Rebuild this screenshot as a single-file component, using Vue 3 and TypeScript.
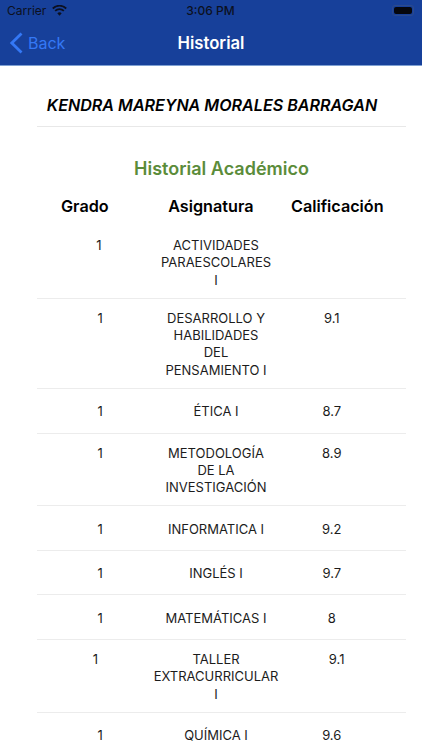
<script setup lang="ts">
interface Row { grade: string; lines: string[]; score: string }
const rows: Row[] = [
  { grade: '1', lines: ['ACTIVIDADES', 'PARAESCOLARES', 'I'], score: '' },
  { grade: '1', lines: ['DESARROLLO Y', 'HABILIDADES', 'DEL', 'PENSAMIENTO I'], score: '9.1' },
  { grade: '1', lines: ['ÉTICA I'], score: '8.7' },
  { grade: '1', lines: ['METODOLOGÍA', 'DE LA', 'INVESTIGACIÓN'], score: '8.9' },
  { grade: '1', lines: ['INFORMATICA I'], score: '9.2' },
  { grade: '1', lines: ['INGLÉS I'], score: '9.7' },
  { grade: '1', lines: ['MATEMÁTICAS I'], score: '8' },
  { grade: '1', lines: ['TALLER', 'EXTRACURRICULAR', 'I'], score: '9.1' },
  { grade: '1', lines: ['QUÍMICA I'], score: '9.6' },
]
</script>

<template>
  <div class="screen">
    <header class="nav">
      <div class="status">
        <div class="status-left">
          <span>Carrier</span>
          <svg class="wifi" viewBox="0 0 16 12" width="15" height="11">
            <path d="M8 11.600 5.600 9a3.400 3.400 0 0 1 4.800 0Z" fill="#0c1020" />
            <path d="M3.900 7.200a5.800 5.800 0 0 1 8.200 0l1.300-1.400a7.700 7.700 0 0 0-10.800 0Z" fill="#0c1020" />
            <path d="M1.300 4.500a9.500 9.500 0 0 1 13.400 0L16 3.100a11.400 11.400 0 0 0-16 0Z" fill="#0c1020" />
          </svg>
        </div>
        <span class="clock">3:06 PM</span>
        <div class="battery"><i></i></div>
      </div>
      <div class="bar">
        <div class="back">
          <svg viewBox="0 0 14 22" width="14" height="22">
            <path d="M12.500 1.500 2.800 11l9.700 9.500" fill="none" stroke="#3478f6" stroke-width="2.800" />
          </svg>
          <span>Back</span>
        </div>
        <h1>Historial</h1>
      </div>
    </header>

    <main class="content">
      <h2 class="student">KENDRA MAREYNA MORALES BARRAGAN</h2>
      <h3 class="section">Historial Académico</h3>
      <div class="head">
        <span>Grado</span>
        <span>Asignatura</span>
        <span>Calificación</span>
      </div>
      <div v-for="(row, i) in rows" :key="i" class="row">
        <span class="cell">{{ row.grade }}</span>
        <div class="subject">
          <span v-for="line in row.lines" :key="line">{{ line }}</span>
        </div>
        <span class="cell">{{ row.score }}</span>
      </div>
    </main>
  </div>
</template>

<style scoped>
.screen {
  width: 422px;
  height: 750px;
  overflow: hidden;
  background: #fff;
  font-family: Inter, "Liberation Sans", sans-serif;
  color: #1c1c1c;
}
.nav {
  height: 65px;
  background: #17409a;
  border-bottom: 1px solid #7ea0d2;
}
.status {
  height: 21px;
  padding: 0 8px 0 7px;
  display: grid;
  grid-template-columns: 1fr auto 1fr;
  align-items: center;
  font-size: 12px;
  color: #0c1020;
}
.status-left {
  display: flex;
  align-items: center;
  gap: 6px;
}
.clock {
  font-weight: 500;
}
.battery {
  justify-self: end;
  width: 22px;
  height: 11px;
  border-radius: 3px;
  border: 1px solid #2c4a8c;
  padding: 1px;
  box-sizing: border-box;
  display: flex;
}
.battery i {
  flex: 1;
  background: #05060c;
  border-radius: 2px;
}
.bar {
  height: 44px;
  position: relative;
  display: flex;
  align-items: center;
  justify-content: center;
}
.bar h1 {
  margin: 0;
  font-size: 16.700px;
  font-weight: 600;
  color: #fff;
}
.back {
  position: absolute;
  left: 9px;
  top: 11px;
  display: flex;
  align-items: center;
  gap: 5px;
  color: #3478f6;
  font-size: 16px;
}
.content {
  padding: 0 16px 0 37px;
}
.student {
  margin: 0;
  height: 61px;
  box-sizing: border-box;
  padding: 28.500px 19px 0 0;
  border-bottom: 1px solid #e8e8e8;
  text-align: center;
  font-size: 16.100px;
  font-weight: 600;
  font-style: italic;
  line-height: 20px;
  color: #000;
}
.section {
  margin: 30px 0 0;
  text-align: center;
  font-size: 18px;
  font-weight: 600;
  line-height: 24px;
  color: #5b8c3a;
}
.head {
  margin-top: 13px;
  margin-bottom: 8px;
  height: 24px;
  display: flex;
  font-size: 16.200px;
  font-weight: 600;
  line-height: 24px;
  color: #000;
}
.head span:nth-child(1) { margin-left: 24px; }
.head span:nth-child(2) { margin-left: 59.500px; }
.head span:nth-child(3) { margin-left: 37.500px; }
.row {
  box-sizing: border-box;
  min-height: 44.500px;
  padding: 11px 11px 9px 0;
  display: grid;
  grid-template-columns: 1fr minmax(105px, auto) 1fr;
  align-content: center;
  border-bottom: 1px solid #ececec;
  font-size: 13px;
  line-height: 17.300px;
  text-align: center;
}
.subject {
  display: flex;
  flex-direction: column;
  white-space: nowrap;
}
</style>
